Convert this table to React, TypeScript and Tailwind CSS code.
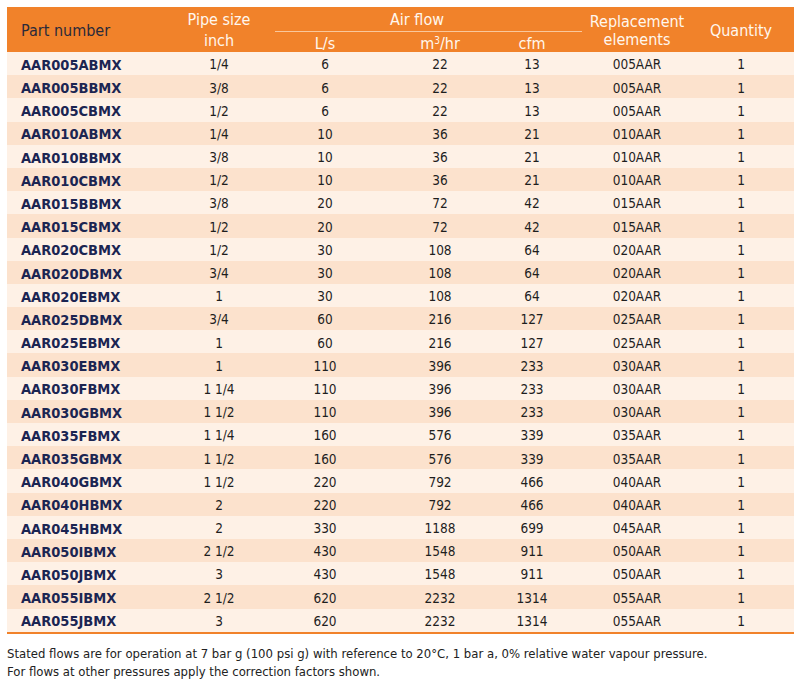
const rows: [string, string, string, string, string, string, string][] = [
  ['AAR005ABMX', '1/4', '6', '22', '13', '005AAR', '1'],
  ['AAR005BBMX', '3/8', '6', '22', '13', '005AAR', '1'],
  ['AAR005CBMX', '1/2', '6', '22', '13', '005AAR', '1'],
  ['AAR010ABMX', '1/4', '10', '36', '21', '010AAR', '1'],
  ['AAR010BBMX', '3/8', '10', '36', '21', '010AAR', '1'],
  ['AAR010CBMX', '1/2', '10', '36', '21', '010AAR', '1'],
  ['AAR015BBMX', '3/8', '20', '72', '42', '015AAR', '1'],
  ['AAR015CBMX', '1/2', '20', '72', '42', '015AAR', '1'],
  ['AAR020CBMX', '1/2', '30', '108', '64', '020AAR', '1'],
  ['AAR020DBMX', '3/4', '30', '108', '64', '020AAR', '1'],
  ['AAR020EBMX', '1', '30', '108', '64', '020AAR', '1'],
  ['AAR025DBMX', '3/4', '60', '216', '127', '025AAR', '1'],
  ['AAR025EBMX', '1', '60', '216', '127', '025AAR', '1'],
  ['AAR030EBMX', '1', '110', '396', '233', '030AAR', '1'],
  ['AAR030FBMX', '1 1/4', '110', '396', '233', '030AAR', '1'],
  ['AAR030GBMX', '1 1/2', '110', '396', '233', '030AAR', '1'],
  ['AAR035FBMX', '1 1/4', '160', '576', '339', '035AAR', '1'],
  ['AAR035GBMX', '1 1/2', '160', '576', '339', '035AAR', '1'],
  ['AAR040GBMX', '1 1/2', '220', '792', '466', '040AAR', '1'],
  ['AAR040HBMX', '2', '220', '792', '466', '040AAR', '1'],
  ['AAR045HBMX', '2', '330', '1188', '699', '045AAR', '1'],
  ['AAR050IBMX', '2 1/2', '430', '1548', '911', '050AAR', '1'],
  ['AAR050JBMX', '3', '430', '1548', '911', '050AAR', '1'],
  ['AAR055IBMX', '2 1/2', '620', '2232', '1314', '055AAR', '1'],
  ['AAR055JBMX', '3', '620', '2232', '1314', '055AAR', '1'],
];

const font = { fontFamily: '"Liberation Sans Narrow", "DejaVu Sans Condensed", "Roboto Condensed", sans-serif' };

export default function App() {
  return (
    <div className="min-h-[689px] bg-white px-[7px] pt-[7px]" style={font}>
      <div className="w-[787px]">
        {/* header */}
        <div className="grid h-[45px] grid-cols-[158px_108px_104px_126px_58px_152px_56px_25px] bg-[#f1822a] text-[16px] leading-none text-[#fff7ee]">
          <div className="flex items-center pl-[14px] pt-[3px] text-[#2a2a3a]">Part number</div>
          <div className="flex flex-col items-center justify-between pt-[5px] pb-[3px]">
            <span>Pipe size</span>
            <span>inch</span>
          </div>
          <div className="col-span-3 flex flex-col">
            <div className="pt-[5px] text-center">Air flow</div>
            <div className="mr-[-21px] ml-[2px] mt-[3px] h-px bg-[#f9c79c]" />
            <div className="mt-[4px] grid grid-cols-[104px_126px_58px]">
              <span className="text-center">L/s</span>
              <span className="text-center">
                m<sup className="text-[10px]">3</sup>/hr
              </span>
              <span className="text-center">cfm</span>
            </div>
          </div>
          <div className="flex flex-col items-center justify-center gap-[2px] pt-[3px]">
            <span>Replacement</span>
            <span>elements</span>
          </div>
          <div className="flex items-center justify-center pt-[3px]">Quantity</div>
          <div />
        </div>
        {/* body */}
        <div className="border-b-2 border-[#f1822a]">
          {rows.map((r, i) => (
            <div
              key={r[0]}
              className={`grid h-[23.2px] grid-cols-[158px_108px_104px_126px_58px_152px_56px_25px] items-center pt-[3px] text-[13.5px] leading-none text-[#1e1e1e] ${i % 2 === 0 ? 'bg-[#fef1e6]' : 'bg-[#fce2cd]'}`}
            >
              <span className="pl-[14px] text-[14.5px] font-bold text-[#1b2552]">{r[0]}</span>
              <span className="text-center">{r[1]}</span>
              <span className="text-center">{r[2]}</span>
              <span className="text-center">{r[3]}</span>
              <span className="text-center">{r[4]}</span>
              <span className="text-center">{r[5]}</span>
              <span className="text-center">{r[6]}</span>
              <span />
            </div>
          ))}
        </div>
        <div className="mt-[11px] text-[13px] leading-[18px] text-[#222]">
          <p>Stated flows are for operation at 7 bar g (100 psi g) with reference to 20°C, 1 bar a, 0% relative water vapour pressure.</p>
          <p>For flows at other pressures apply the correction factors shown.</p>
        </div>
      </div>
    </div>
  );
}
